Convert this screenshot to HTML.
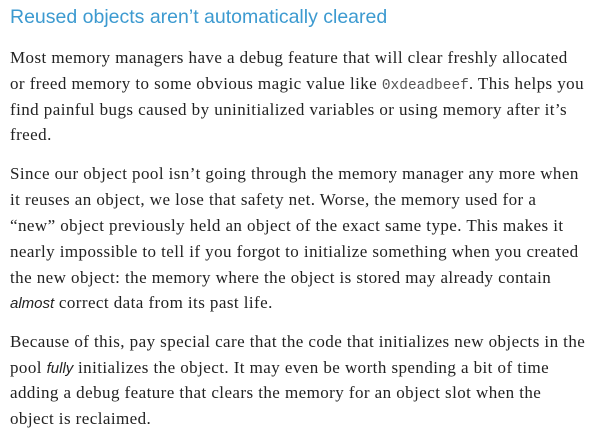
<!DOCTYPE html>
<html><head><meta charset="utf-8"><style>
html,body{margin:0;padding:0;background:#fff;width:600px;height:430px;overflow:hidden}
.w{position:absolute;left:10px;top:3px}
h2{margin:0;position:absolute;top:3px;left:0;font:19.5px "Liberation Sans",sans-serif;color:#3c9ad0;white-space:nowrap}
.l{position:absolute;left:0;white-space:nowrap;font:17px "Liberation Serif",serif;letter-spacing:0.43px;color:#222;line-height:20px}
code{font-family:"Liberation Mono",monospace;font-size:14.5px;color:#555;letter-spacing:0}
i{font-family:"Liberation Sans",sans-serif;font-size:15px;letter-spacing:0}
</style></head><body><div class="w">
<h2>Reused objects aren’t automatically cleared</h2>
<div class="l" style="top:45px">Most memory managers have a debug feature that will clear freshly allocated</div>
<div class="l" style="top:71px">or freed memory to some obvious magic value like <code>0xdeadbeef</code>. This helps you</div>
<div class="l" style="top:97px">find painful bugs caused by uninitialized variables or using memory after it’s</div>
<div class="l" style="top:122px">freed.</div>
<div class="l" style="top:161px">Since our object pool isn’t going through the memory manager any more when</div>
<div class="l" style="top:187px">it reuses an object, we lose that safety net. Worse, the memory used for a</div>
<div class="l" style="top:213px">“new” object previously held an object of the exact same type. This makes it</div>
<div class="l" style="top:239px">nearly impossible to tell if you forgot to initialize something when you created</div>
<div class="l" style="top:265px">the new object: the memory where the object is stored may already contain</div>
<div class="l" style="top:290px"><i>almost</i> correct data from its past life.</div>
<div class="l" style="top:329px">Because of this, pay special care that the code that initializes new objects in the</div>
<div class="l" style="top:355px">pool <i>fully</i> initializes the object. It may even be worth spending a bit of time</div>
<div class="l" style="top:380px">adding a debug feature that clears the memory for an object slot when the</div>
<div class="l" style="top:406px">object is reclaimed.</div>
</div></body></html>
